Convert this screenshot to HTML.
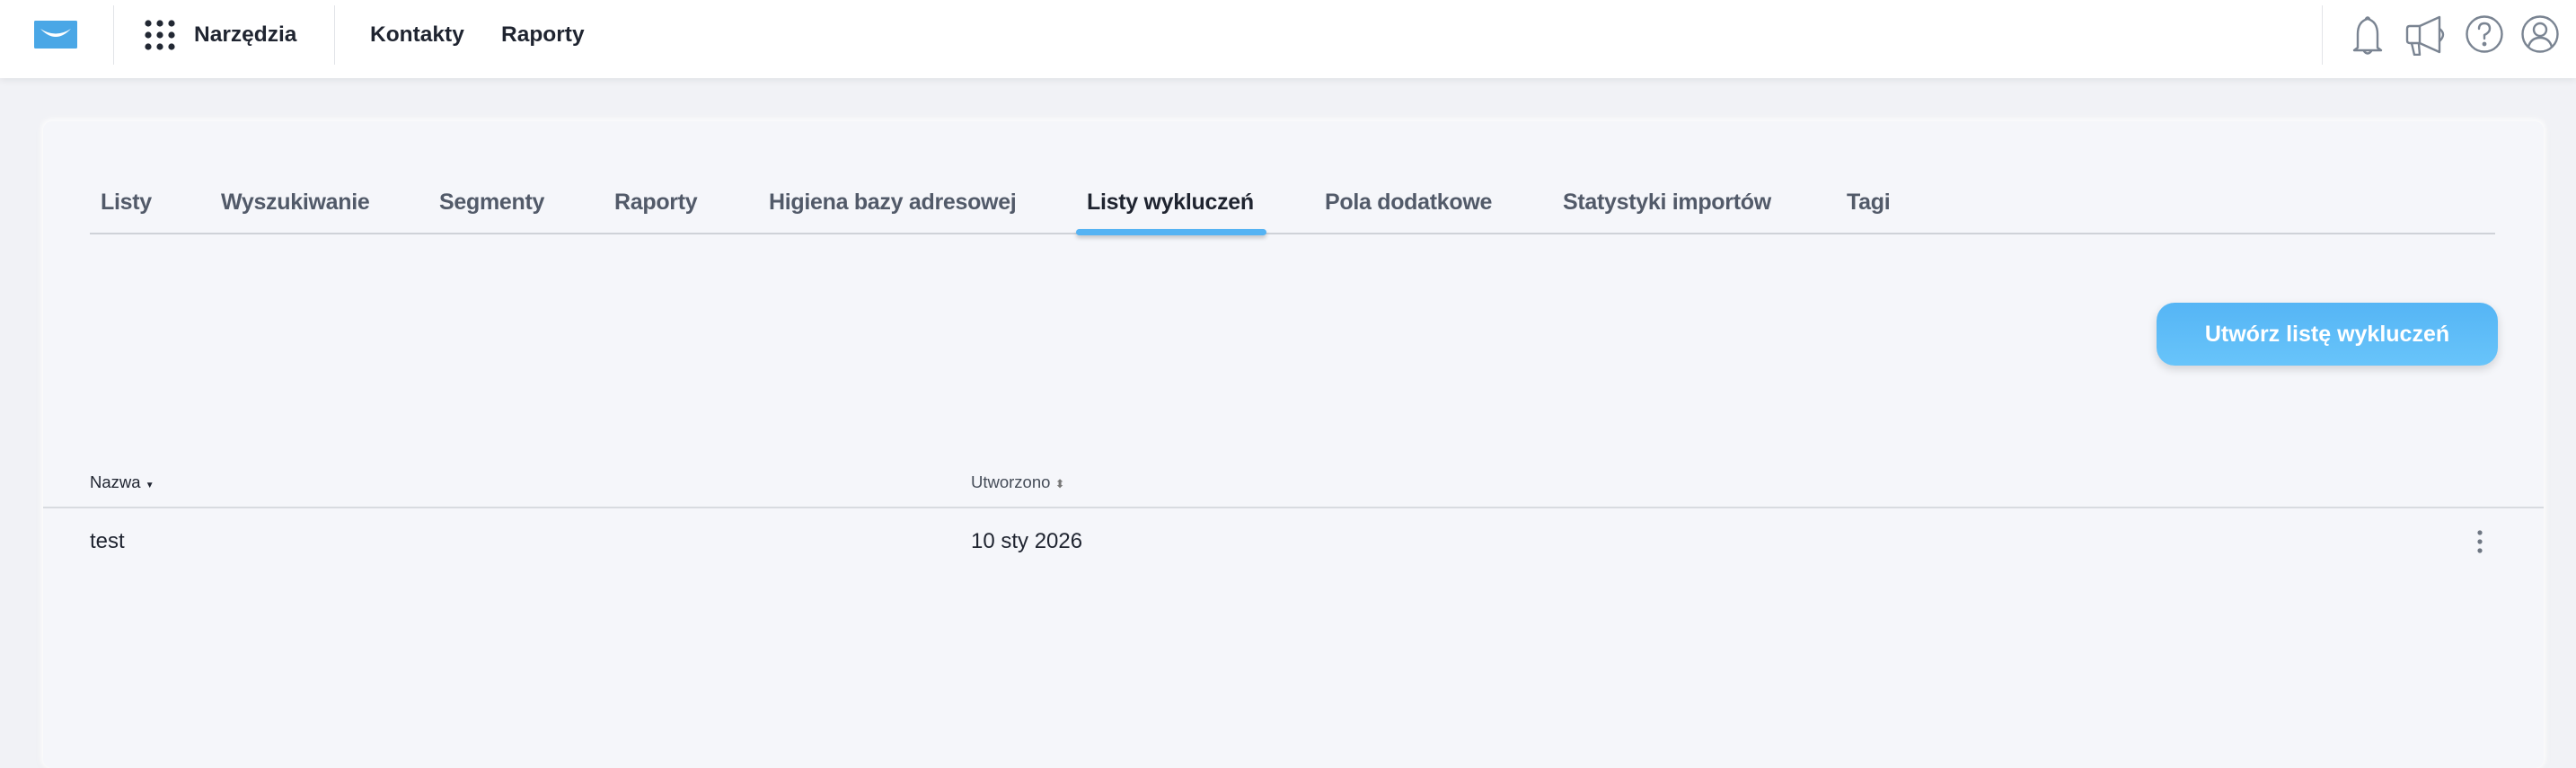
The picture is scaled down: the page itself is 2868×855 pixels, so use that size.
<!DOCTYPE html>
<html><head><meta charset="utf-8"><style>
*{margin:0;padding:0;box-sizing:border-box}
body{width:2868px;height:804px;overflow:hidden;background:#f1f2f6;font-family:"Liberation Sans",sans-serif;position:relative}
.hdr{position:absolute;left:0;top:0;width:2868px;height:87px;background:#fff;box-shadow:0 2px 8px rgba(0,0,0,.08)}
.a{position:absolute;white-space:nowrap}
.vd{position:absolute;top:6px;width:1px;height:66px;background:#e2e4e8}
.hn{font-weight:bold;font-size:24.5px;color:#1f2430;top:25px}
.card{position:absolute;left:48px;top:135px;width:2784px;height:720px;background:#f5f6fa;border-radius:10px;box-shadow:0 0 6px 3px rgba(255,255,255,.9),0 2px 10px rgba(0,0,0,.08)}
.tab{font-weight:bold;font-size:25px;color:#525a69;top:211px;letter-spacing:-0.3px}
.btn{position:absolute;left:2401px;top:337px;width:380px;height:70px;border-radius:20px;background:linear-gradient(#55b5f5,#68c4fa);box-shadow:0 4px 10px rgba(0,0,0,.15);color:#fff;font-weight:bold;font-size:25px;text-align:center;line-height:70px}
</style></head><body>
<div class="hdr">
 <svg class="a" style="left:38px;top:23px" width="48" height="31" viewBox="0 0 48 31"><rect width="48" height="31" rx="1.5" fill="#4aa7e6"/><path d="M7 9 Q24 27 41 9 Q24 20 7 9Z" fill="#fff"/></svg>
 <div class="vd" style="left:126px"></div>
 <svg class="a" style="left:161px;top:22px" width="34" height="34" viewBox="0 0 34 34" fill="#222833"><circle cx="4" cy="4" r="3.6"/><circle cx="17" cy="4" r="3.6"/><circle cx="30" cy="4" r="3.6"/><circle cx="4" cy="17" r="3.6"/><circle cx="17" cy="17" r="3.6"/><circle cx="30" cy="17" r="3.6"/><circle cx="4" cy="30" r="3.6"/><circle cx="17" cy="30" r="3.6"/><circle cx="30" cy="30" r="3.6"/></svg>
 <div class="a hn" style="left:216px">Narzędzia</div>
 <div class="vd" style="left:372px"></div>
 <div class="a hn" style="left:412px">Kontakty</div>
 <div class="a hn" style="left:558px">Raporty</div>
 <div class="vd" style="left:2585px"></div>
 <svg class="a" style="left:2614px;top:16px" width="240" height="46" viewBox="0 0 240 46" fill="none" stroke="#7a8492" stroke-width="2.4" stroke-linejoin="round" stroke-linecap="round">
  <path d="M11 37 L11 22 Q11 8 22 5 Q33 8 33 22 L33 37 L37 40 L7 40 Z"/><path d="M18 41 Q22 46 26 41"/><path d="M20 5 Q22 2 24 5"/>
  <path d="M80 13 L102 3 L102 42 L80 32 Z"/><path d="M80 13 L69 13 Q66 13 66 16 L66 29 Q66 32 69 32 L80 32"/><path d="M71 32 L74 45 L80 45 L79 33"/><path d="M102 16 Q110 22 102 30"/>
  <circle cx="152" cy="22" r="19.5"/><path d="M146 16 Q146 10 152 10 Q158 10 158 16 Q158 20 152 23 L152 27"/><circle cx="152" cy="33" r="1.2" fill="#7a8492"/>
  <circle cx="214" cy="22" r="19.5"/><circle cx="214" cy="17" r="7"/><path d="M201 36 Q204 26 214 26 Q224 26 227 36"/>
 </svg>
</div>
<div class="card"></div>
<div class="a tab" style="left:112px">Listy</div>
<div class="a tab" style="left:246px">Wyszukiwanie</div>
<div class="a tab" style="left:489px">Segmenty</div>
<div class="a tab" style="left:684px">Raporty</div>
<div class="a tab" style="left:856px">Higiena bazy adresowej</div>
<div class="a tab" style="left:1210px;color:#1f2430">Listy wykluczeń</div>
<div class="a tab" style="left:1475px">Pola dodatkowe</div>
<div class="a tab" style="left:1740px">Statystyki importów</div>
<div class="a tab" style="left:2056px">Tagi</div>
<div class="a" style="left:100px;top:259px;width:2678px;height:2px;background:#cfd2d8"></div>
<div class="a" style="left:1198px;top:255px;width:212px;height:7px;border-radius:4px;background:#55b3f3;box-shadow:0 3px 5px rgba(0,0,0,.2)"></div>
<div class="btn">Utwórz listę wykluczeń</div>
<div class="a" style="left:100px;top:526px;font-size:18.5px;color:#1f2430">Nazwa <span style="font-size:10px">▼</span></div>
<div class="a" style="left:1081px;top:526px;font-size:18.5px;color:#454c58">Utworzono <span style="font-size:13px;color:#777">⬍</span></div>
<div class="a" style="left:48px;top:564px;width:2784px;height:2px;background:#d8dbe0"></div>
<div class="a" style="left:100px;top:589px;font-size:24px;color:#1f2430">test</div>
<div class="a" style="left:1081px;top:589px;font-size:24px;color:#1f2430">10 sty 2026</div>
<svg class="a" style="left:2757px;top:589px" width="8" height="28" fill="#6e7682"><circle cx="4" cy="4" r="2.6"/><circle cx="4" cy="14" r="2.6"/><circle cx="4" cy="24" r="2.6"/></svg>
</body></html>
